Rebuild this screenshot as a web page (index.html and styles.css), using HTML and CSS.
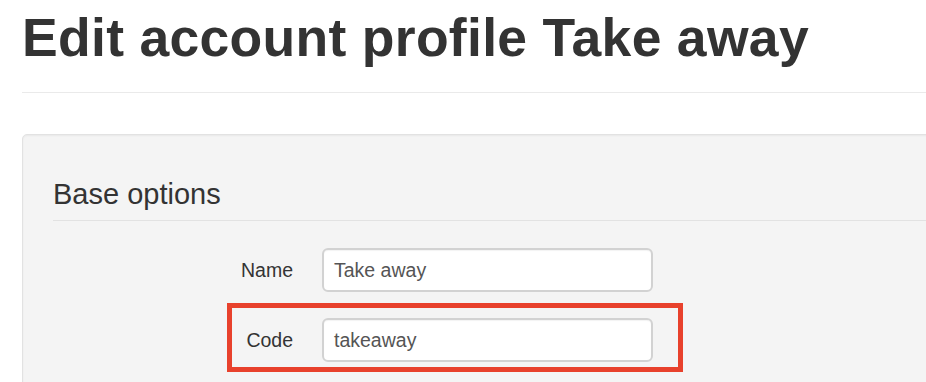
FILE: index.html
```html
<!DOCTYPE html>
<html>
<head>
<meta charset="utf-8">
<link rel="stylesheet" href="styles.css">
</head>
<body>
<div class="page">
  <h1 class="title">Edit account profile Take away</h1>
  <hr class="divider">
  <div class="panel">
    <div class="legend">Base options</div>
    <div class="form">
      <div class="row">
        <label class="label">Name</label>
        <div class="input">Take away</div>
      </div>
      <div class="row row-highlight">
        <label class="label">Code</label>
        <div class="input">takeaway</div>
      </div>
    </div>
  </div>
</div>
</body>
</html>
```

FILE: styles.css
```css
html, body {
  margin: 0;
  padding: 0;
  background: #fff;
  overflow: hidden;
}
body {
  font-family: "Liberation Sans", Arial, Helvetica, sans-serif;
  color: #333;
}
.page {
  padding-left: 22px;
  width: 1200px;
}
.title {
  margin: 9px 0 0 0;
  font-size: 53.5px;
  line-height: 58px;
  font-weight: bold;
  color: #333;
  letter-spacing: 0.3px;
}
.divider {
  margin: 25px 0 0 0;
  border: 0;
  border-top: 1px solid #eaeaea;
  height: 0;
}
.panel {
  margin-top: 41px;
  background: #f4f4f4;
  border: 1px solid #e2e2e2;
  border-radius: 5px;
  box-shadow: inset 0 1px 2px rgba(0,0,0,0.05);
  padding: 38px 0 40px 30px;
}
.legend {
  font-size: 29px;
  line-height: 42px;
  color: #333;
  padding-bottom: 5px;
  border-bottom: 1px solid #e2e2e2;
}
.form {
  margin-top: 27px;
  display: flex;
  flex-direction: column;
  gap: 26px;
}
.row {
  display: grid;
  grid-template-columns: 240px 331px;
  column-gap: 29px;
  align-items: center;
  position: relative;
}
.label {
  text-align: right;
  font-size: 19.5px;
  color: #333;
}
.input {
  box-sizing: border-box;
  height: 44px;
  padding: 0 10px;
  line-height: 40px;
  font-size: 19.5px;
  color: #555;
  background: #fff;
  border: 2px solid #d2d2d2;
  border-radius: 6px;
  box-shadow: inset 0 1px 1px rgba(0,0,0,0.05);
}
.row-highlight::after {
  content: "";
  position: absolute;
  left: 174px;
  top: -15px;
  width: 446px;
  height: 59px;
  border: 5px solid #e8412c;
  pointer-events: none;
}
```
